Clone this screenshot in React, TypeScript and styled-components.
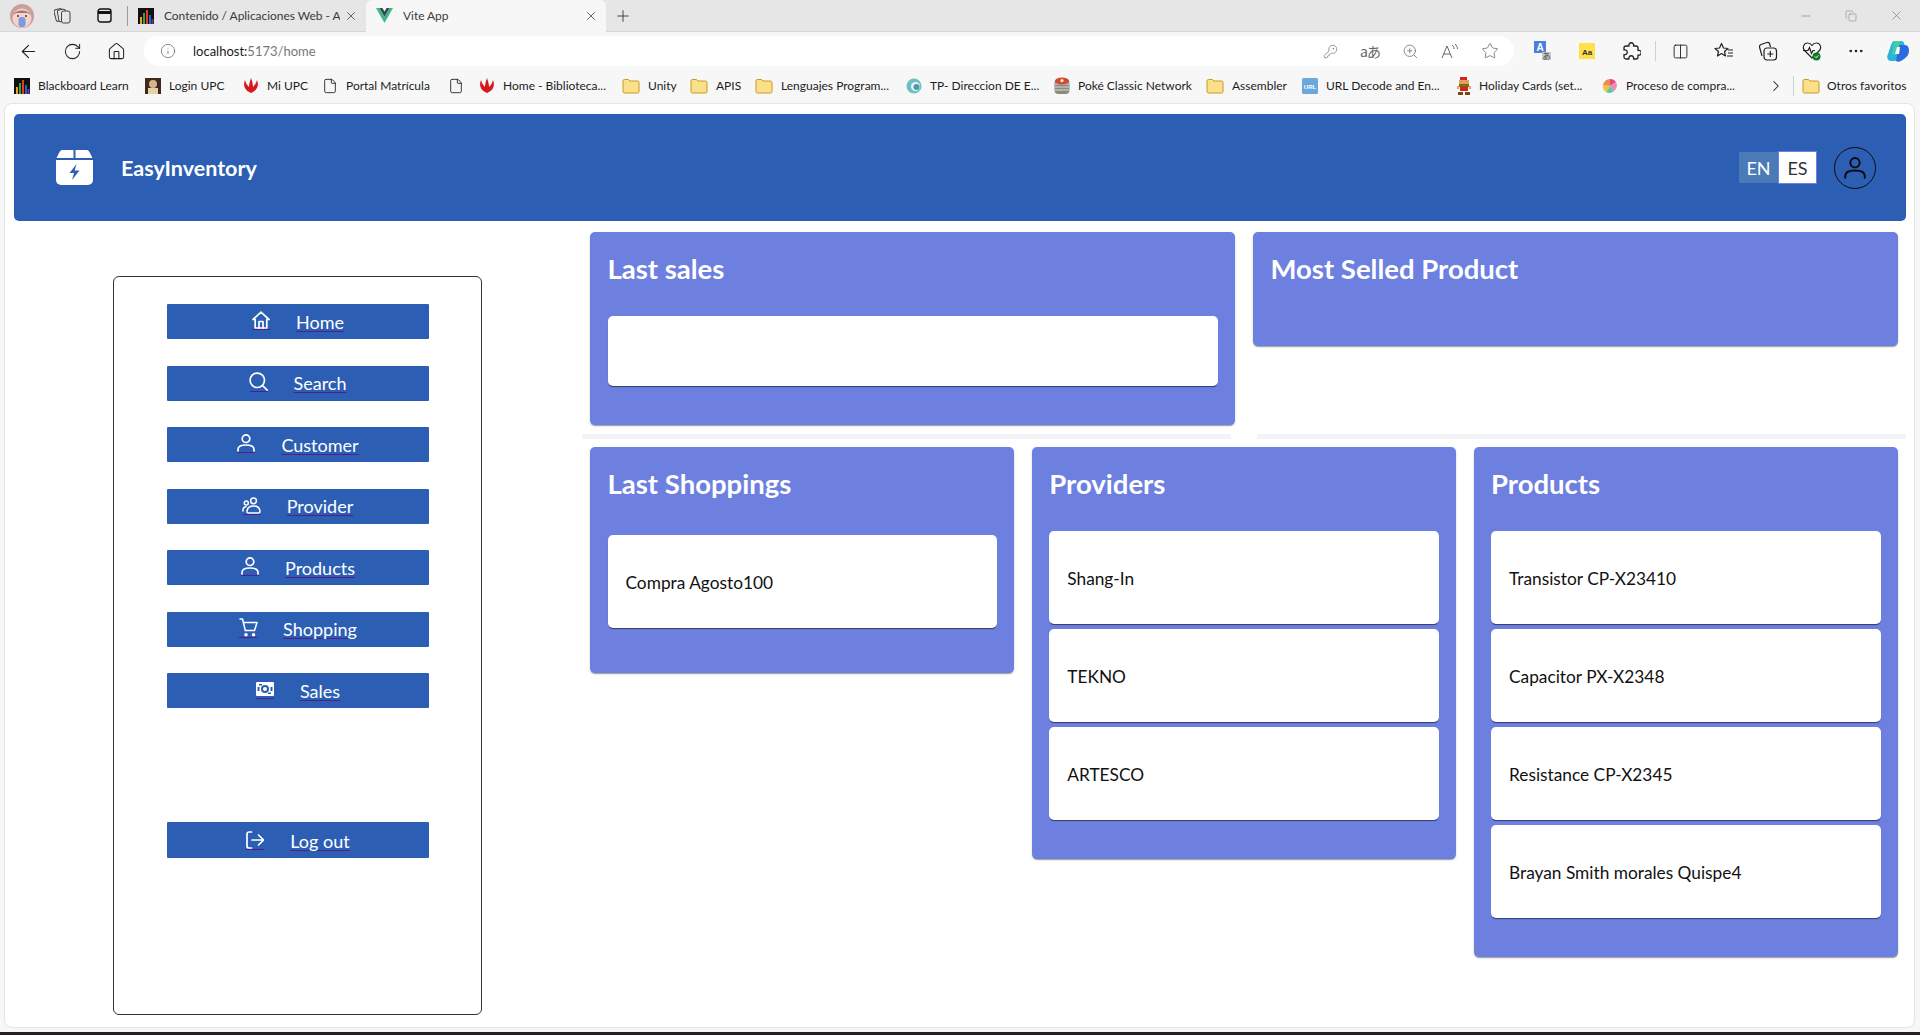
import React from 'react';
import styled, { createGlobalStyle } from 'styled-components';
import {
  ArrowLeft,
  RotateCw,
  House,
  Info,
  KeyRound,
  ZoomIn,
  Star,
  Columns2,
  Ellipsis,
  X,
  Plus,
  Minus,
  Copy,
  File,
  ChevronRight,
} from 'lucide-react';

const BLUE = '#2c5fb3';
const INDIGO = '#6d80e0';
const FONT = `Lato, "Open Sans", sans-serif`;

const GlobalStyle = createGlobalStyle`
  html, body {
    margin: 0;
    padding: 0;
    background: #f7f7f7;
    font-family: ${FONT};
  }
  * { box-sizing: border-box; }
`;

const Screen = styled.div`
  width: 1920px;
  height: 1035px;
  overflow: hidden;
  background: #f7f7f7;
  display: flex;
  flex-direction: column;
`;

/* browser chrome */
const TabStrip = styled.div`
  height: 32px;
  background: #e6e6e6;
  border-bottom: 1px solid #d6d6d6;
  display: flex;
  align-items: center;
  color: #333;
`;

const Profile = styled.div`
  width: 24px;
  height: 24px;
  margin: 0 12px 0 10px;
  display: flex;
`;

const StripIcon = styled.div<{ $w: number }>`
  width: ${(p) => p.$w}px;
  display: flex;
  align-items: center;
  justify-content: center;
  color: #333;
`;

const StripSep = styled.div`
  width: 1px;
  height: 20px;
  background: #9a9a9a;
  margin: 0 10px 0 -3px;
`;

const Tab = styled.div<{ $active?: boolean; $w: number }>`
  width: ${(p) => p.$w}px;
  height: 32px;
  display: flex;
  align-items: center;
  gap: 10px;
  padding-right: 8px;
  background: ${(p) => (p.$active ? '#f7f7f7' : 'transparent')};
  border-radius: ${(p) => (p.$active ? '6px 6px 0 0' : '0')};
  padding-left: ${(p) => (p.$active ? '10px' : '0')};
  font-size: 12px;
  color: #3a3a3a;
  svg:last-child {
    margin-left: -6px;
  }
`;

const TabTitle = styled.span`
  flex: 1;
  white-space: nowrap;
  overflow: hidden;
  letter-spacing: -0.05px;
`;

const WindowControls = styled.div`
  margin-left: auto;
  display: flex;
  align-items: center;
  gap: 32px;
  padding-right: 16px;
  color: #777;
`;

const Toolbar = styled.div`
  height: 40px;
  display: flex;
  align-items: center;
  padding: 0 2px 2px 6px;
  color: #222;
`;

const ToolButton = styled.div<{ $w?: number }>`
  width: ${(p) => p.$w ?? 44}px;
  height: 30px;
  flex: none;
  display: flex;
  align-items: center;
  justify-content: center;
`;

const AddressBar = styled.div`
  flex: 1;
  height: 30px;
  margin-left: 6px;
  margin-right: 4px;
  background: #fff;
  border-radius: 15px;
  display: flex;
  align-items: center;
  padding: 0 4px 0 16px;
  color: #6e6e6e;
`;

const Url = styled.div`
  flex: 1;
  margin-left: 17px;
  font-size: 13px;
  color: #777;
  b {
    font-weight: 400;
    color: #1a1a1a;
  }
`;

const AddressIcon = styled.div`
  width: 40px;
  display: flex;
  justify-content: center;
`;

const Extensions = styled.div`
  display: flex;
  flex: none;
  padding-left: 3px;
`;

const ToolSep = styled.div`
  width: 5px;
  height: 20px;
  flex: none;
  display: flex;
  justify-content: center;
  &:before {
    content: '';
    width: 1px;
    background: #d0d0d0;
  }
`;

const Bookmarks = styled.div`
  height: 31px;
  display: flex;
  align-items: center;
  padding: 0 0 4px 14px;
  font-size: 12px;
  color: #1c1c1c;
`;

const Bookmark = styled.div<{ $w: number; $gap?: number }>`
  width: ${(p) => p.$w}px;
  flex: none;
  display: flex;
  align-items: center;
  gap: ${(p) => p.$gap ?? 8}px;
  white-space: nowrap;
  svg {
    flex: none;
  }
`;

const BookmarkSep = styled.div`
  width: 1px;
  height: 20px;
  background: #d0d0d0;
  margin-right: 8px;
`;

/* page */
const Page = styled.div`
  height: 925px;
  margin: 0 5px 0 4px;
  flex: none;
  background: #fff;
  border: 1px solid #e4e4e4;
  border-radius: 8px;
  padding: 10px 8px 0 9px;
  display: flex;
  flex-direction: column;
`;

const Desktop = styled.div`
  margin-top: 4px;
  flex: 1;
  background: #2a1b22;
`;

const Header = styled.header`
  height: 107px;
  flex: none;
  background: ${BLUE};
  border-radius: 5px;
  display: flex;
  align-items: center;
  padding: 0 30px 0 42px;
  color: #fff;
`;

const Brand = styled.div`
  margin: 1px 0 0 28px;
  font-size: 21.5px;
  font-weight: 700;
`;

const LangGroup = styled.div`
  margin-left: auto;
  display: flex;
  align-items: center;
`;

const LangButton = styled.div<{ $active?: boolean }>`
  width: 39px;
  height: ${(p) => (p.$active ? 33 : 31)}px;
  display: flex;
  align-items: center;
  justify-content: center;
  font-size: 18px;
  background: ${(p) => (p.$active ? '#fff' : '#4b7bb6')};
  color: ${(p) => (p.$active ? '#333' : '#fff')};
  border: ${(p) => (p.$active ? `1px solid ${INDIGO}` : 'none')};
`;

const Avatar = styled.div`
  width: 42px;
  height: 42px;
  margin-left: 17px;
  border: 1.5px solid #0c0c0c;
  border-radius: 50%;
  color: #0c0c0c;
  display: flex;
  align-items: center;
  justify-content: center;
`;

const Body = styled.div`
  flex: 1;
  display: flex;
`;

const Aside = styled.aside`
  width: 568px;
  flex: none;
  display: flex;
  justify-content: center;
  padding: 55px 1px 0 0;
`;

const Sidebar = styled.nav`
  width: 369px;
  height: 739px;
  border: 1.5px solid #333;
  border-radius: 6px;
  padding: 27px 0 0 1px;
  display: flex;
  flex-direction: column;
  align-items: center;
  gap: 26.5px;
`;

const NavButton = styled.a<{ $last?: boolean }>`
  width: 262px;
  height: ${(p) => (p.$last ? 36 : 35)}px;
  flex: none;
  margin-top: ${(p) => (p.$last ? '87.5px' : '0')};
  padding-top: ${(p) => (p.$last ? '2px' : '0')};
  background: ${BLUE};
  border-radius: 1px;
  display: flex;
  align-items: center;
  justify-content: center;
  gap: 26px;
  color: #fff;
  font-size: 18px;
`;

const NavIcon = styled.span`
  width: 18px;
  height: 19px;
  margin-top: -2px;
  display: flex;
  justify-content: center;
  align-items: flex-end;
  border-bottom: 1px solid #551a8b;
  svg {
    flex: none;
  }
`;

const NavLabel = styled.span`
  text-decoration: underline;
  text-decoration-color: #551a8b;
  text-decoration-thickness: 1px;
  text-underline-offset: 2px;
`;

const Main = styled.main`
  flex: 1;
  min-width: 0;
  display: flex;
  flex-direction: column;
  padding-top: 11px;
`;

const CardRow = styled.div<{ $gap: number }>`
  display: flex;
  align-items: flex-start;
  gap: ${(p) => p.$gap}px;
  padding: 0 8px;
`;

const Card = styled.section<{ $bottom: number }>`
  flex: 1 1 0;
  min-width: 0;
  background: ${INDIGO};
  border-radius: 5px;
  padding: 0 17.5px ${(p) => p.$bottom}px;
  box-shadow: 0 2px 1px -1px rgba(0, 0, 0, 0.2), 0 1px 1px 0 rgba(0, 0, 0, 0.14), 0 1px 3px 0 rgba(0, 0, 0, 0.12);
`;

const CardTitle = styled.h2`
  margin: 0;
  height: 72px;
  display: flex;
  align-items: center;
  color: #fff;
  font-size: 27.5px;
  font-weight: 700;
`;

const ItemList = styled.div<{ $top: number }>`
  margin-top: ${(p) => p.$top}px;
  display: flex;
  flex-direction: column;
  gap: 4.9px;
`;

const Item = styled.div<{ $h: number }>`
  height: ${(p) => p.$h}px;
  background: #fff;
  border-radius: 5px;
  display: flex;
  align-items: center;
  padding: 2px 18px 0;
  font-size: 17.3px;
  color: #111;
  box-shadow: 0 2px 1px -1px rgba(0, 0, 0, 0.4), 0 1px 1px 0 rgba(0, 0, 0, 0.2);
`;

const Dividers = styled.div`
  display: flex;
  gap: 26px;
  margin: 9px 0 8px;
`;

const Divider = styled.div`
  width: 649px;
  height: 5px;
  background: #f2f3f7;
`;

/* small drawings */
const Bars = () => (
  <svg width="16" height="16" viewBox="0 0 16 16">
    <rect width="16" height="16" fill="#111" />
    <rect x="2" y="9" width="2" height="7" fill="#f0a020" />
    <rect x="5" y="5" width="2" height="11" fill="#3aa040" />
    <rect x="8" y="2" width="2" height="14" fill="#e04020" />
    <rect x="11" y="7" width="2" height="9" fill="#3060d0" />
    <rect x="13.5" y="11" width="2" height="5" fill="#7030a0" />
  </svg>
);

const VueMark = () => (
  <svg width="17" height="15" viewBox="0 0 17 15">
    <path d="M0 0h3.4l5.1 8.8L13.6 0H17L8.5 15z" fill="#41b883" />
    <path d="M3.4 0h3l2.1 3.6L10.6 0h3L8.5 8.8z" fill="#35495e" />
  </svg>
);

const ProfileFace = () => (
  <svg width="24" height="24" viewBox="0 0 24 24">
    <circle cx="12" cy="12" r="12" fill="#c9a09a" />
    <circle cx="12" cy="14" r="9.5" fill="#f4d3cc" />
    <path d="M3 11c2-6 16-6 18 0l-3-2H6z" fill="#a87a76" />
    <rect x="8.5" y="13" width="7" height="10" rx="3" fill="#7d9be0" />
    <circle cx="8" cy="12" r="1" fill="#5a3a3a" />
    <circle cx="16" cy="12" r="1" fill="#5a3a3a" />
  </svg>
);

const Workspaces = () => (
  <svg width="17" height="17" viewBox="0 0 17 17" fill="#e6e6e6" stroke="#444" strokeWidth="1">
    <rect x="1" y="2" width="8" height="12" rx="2" transform="rotate(-14 5 8)" />
    <rect x="4" y="2.5" width="8" height="12" rx="2" transform="rotate(-10 8 8)" />
    <rect x="7.5" y="4" width="8.5" height="12" rx="2" />
  </svg>
);

const TabActions = () => (
  <svg width="15" height="15" viewBox="0 0 15 15" fill="none" stroke="#111" strokeWidth="1.4">
    <rect x="1" y="1" width="13" height="13" rx="2.5" />
    <path d="M1 4.5h13" strokeWidth="3" />
  </svg>
);

const Upc = () => (
  <svg width="16" height="16" viewBox="0 0 16 16">
    <path d="M2 2c-2 5-1 10 6 13 7-3 8-8 6-13-1 4-3 6-4 7 0-3-1-6-2-9-1 3-2 6-2 9C5 8 3 6 2 2z" fill="#d8171e" />
  </svg>
);

const Folder = () => (
  <svg width="18" height="16" viewBox="0 0 18 16">
    <path d="M1 3a1.5 1.5 0 0 1 1.5-1.5h4L8 3h7.5A1.5 1.5 0 0 1 17 4.5v9a1.5 1.5 0 0 1-1.5 1.5h-13A1.5 1.5 0 0 1 1 13.5z" fill="#fbe08a" stroke="#c99a1c" />
  </svg>
);

const Portrait = () => (
  <svg width="16" height="16" viewBox="0 0 16 16">
    <rect width="16" height="16" fill="#40281c" />
    <circle cx="8" cy="6" r="4" fill="#d8b48c" />
    <rect x="3" y="10" width="10" height="6" fill="#e6d0a8" />
  </svg>
);

const TpMark = () => (
  <svg width="16" height="16" viewBox="0 0 16 16">
    <circle cx="8" cy="8" r="7.5" fill="#6cc0c4" />
    <circle cx="9.5" cy="8.5" r="4.5" fill="#e8f4f4" />
    <circle cx="10.5" cy="9" r="3" fill="#4a9aa8" />
  </svg>
);

const Stack = () => (
  <svg width="16" height="18" viewBox="0 0 16 18">
    <rect x="0.5" y="2" width="15" height="15" rx="4" fill="#8a8a80" />
    <path d="M1 7h14M1 10h14M1 13h14" stroke="#dedcd2" />
    <ellipse cx="8" cy="4" rx="7" ry="3.5" fill="#d24a30" />
    <circle cx="8" cy="3.6" r="1.6" fill="#eee" />
  </svg>
);

const UrlMark = () => (
  <svg width="16" height="16" viewBox="0 0 16 16">
    <rect width="16" height="16" rx="1.5" fill="#6aa8dc" />
    <text x="8" y="10.5" textAnchor="middle" fontSize="6" fontWeight="700" fill="#fff" fontFamily="Liberation Sans, sans-serif">URL</text>
  </svg>
);

const Mario = () => (
  <svg width="14" height="18" viewBox="0 0 14 18" shapeRendering="crispEdges">
    <rect x="3" y="0" width="7" height="3" fill="#d8201c" />
    <rect x="2" y="3" width="10" height="4" fill="#e0a060" />
    <rect x="2" y="7" width="10" height="3" fill="#7a6a10" />
    <rect x="3" y="10" width="8" height="4" fill="#d8201c" />
    <rect x="0" y="9" width="2" height="3" fill="#e0a060" />
    <rect x="12" y="9" width="2" height="3" fill="#e0a060" />
    <rect x="1" y="15" width="5" height="3" fill="#7a4a10" />
    <rect x="8" y="15" width="5" height="3" fill="#7a4a10" />
  </svg>
);

const Pinwheel = () => (
  <svg width="16" height="16" viewBox="0 0 16 16">
    <path d="M8 8V1a7 7 0 0 1 6 3z" fill="#e8467c" />
    <path d="M8 8l6-4a7 7 0 0 1-2 9z" fill="#f08ab0" />
    <path d="M8 8l4 5a7 7 0 0 1-8 1z" fill="#5cc8a8" />
    <path d="M8 8l-4 6a7 7 0 0 1-3-7z" fill="#f4c040" />
    <path d="M8 8L1 7a7 7 0 0 1 7-6z" fill="#f08a50" />
  </svg>
);

const TranslateMark = () => (
  <svg width="18" height="20" viewBox="0 0 18 20">
    <rect width="12" height="12" fill="#4a7fdc" />
    <text x="6" y="10" textAnchor="middle" fontSize="10" fontWeight="700" fill="#fff" fontFamily="Liberation Sans, sans-serif">A</text>
    <rect x="8" y="11" width="9" height="8" fill="#c8c8c8" />
    <text x="12.5" y="18" textAnchor="middle" fontSize="8" fill="#444" fontFamily="Noto Sans CJK JP, sans-serif">あ</text>
  </svg>
);

const ReaderMark = () => (
  <svg width="16" height="16" viewBox="0 0 16 16">
    <rect width="16" height="16" fill="#ffe14d" />
    <text x="8" y="11.5" textAnchor="middle" fontSize="8" fontWeight="700" fill="#333" fontFamily="Liberation Sans, sans-serif">Aa</text>
  </svg>
);

const PuzzleMark = () => (
  <svg width="19" height="19" viewBox="0 0 19 19" fill="none" stroke="#222" strokeWidth="1.3" strokeLinejoin="round">
    <path d="M4 4h3a2.4 2.4 0 1 1 4.500 0H14a2 2 0 0 1 2 2v2.500a2.400 2.400 0 1 1 0 4.500V15a2 2 0 0 1-2 2h-2.500a2.400 2.400 0 1 0-4.500 0H4a2 2 0 0 1-2-2v-2.500a2.400 2.400 0 1 0 0-4.500V6a2 2 0 0 1 2-2z" />
  </svg>
);

const FavoritesMark = () => (
  <svg width="20" height="18" viewBox="0 0 20 18" fill="none" stroke="#222" strokeWidth="1.2" strokeLinejoin="round">
    <path d="M7.5 1.5l2 4.500 4.500.5-3.500 3 1 4.500-4-2.500-4 2.500 1-4.500-3.500-3 4.500-.5z" />
    <path d="M14 8h5M14 11h5M13 14h6" />
  </svg>
);

const CollectionsMark = () => (
  <svg width="20" height="20" viewBox="0 0 20 20" fill="none" stroke="#222" strokeWidth="1.2" strokeLinejoin="round">
    <path d="M4 15L1.500 6c-.3-1.500.5-2 1.500-2.500l6-2c1-.3 2 0 2.500 1L12.500 6" />
    <rect x="6" y="7" width="12.5" height="12" rx="3" fill="#f7f7f7" />
    <path d="M12.300 10v6M9.300 13h6" />
  </svg>
);

const HeartCheckMark = () => (
  <svg width="20" height="20" viewBox="0 0 20 20">
    <path d="M10 17L2.500 9.500C0 6.500 2 2 5.500 2 7.500 2 9 3 10 4.500 11 3 12.500 2 14.500 2 18 2 20 6.500 17.500 9.500z" fill="none" stroke="#222" strokeWidth="1.2" />
    <path d="M1 9.500h5l1.500-3 2 6 1.500-3h2" fill="none" stroke="#222" strokeWidth="1.2" />
    <circle cx="14.5" cy="15.5" r="4" fill="#117a28" />
    <path d="M12.800 15.500l1.300 1.300 2.200-2.400" fill="none" stroke="#fff" strokeWidth="1" />
  </svg>
);

const CopilotMark = () => (
  <svg width="22" height="24" viewBox="0 0 22 24">
    <path d="M7 2h7c3 0 4 3 3 6l-4 9c-1 3-3 5-6 5H4c-3 0-5-3-3-7l3-9c1-2 2-4 3-4z" fill="#2cb4d8" />
    <path d="M12 6h6c3 0 4 3 4 6s-2 6-5 8l-3 2c-2 1-4 1-5 0z" fill="#2a6be0" />
    <path d="M7 2h7l-5 12c-1 2-3 2-4 1z" fill="#3bd0a8" />
    <path d="M10 8h3l-1 7h-4z" fill="#fff" />
  </svg>
);

const ReadAloud = () => (
  <svg width="18" height="16" viewBox="0 0 18 16" fill="none" stroke="#666" strokeWidth="1">
    <path d="M1 15L6 3l5 12M3 11h6" />
    <path d="M11 2c1.500 1 2 2 2 4M14 1c1.500 1.300 2.500 3 2.500 5" />
  </svg>
);

const AaJp = styled.span`
  font-size: 14px;
  font-family: "Noto Sans CJK JP", sans-serif;
  color: #666;
  letter-spacing: -1px;
`;

const BoxLogo = () => (
  <svg width="37" height="35" viewBox="0 0 37 35">
    <path d="M6 0h11.500v8H0.500L3 3C4 1 5 0 6 0zM19.500 0H31c1 0 2 1 3 3l2.500 5h-17z" fill="#fff" />
    <path d="M0 10h37v20a5 5 0 0 1-5 5H5a5 5 0 0 1-5-5z" fill="#fff" />
    <path d="M20.500 14l-7 9h4.500l-2 7 7.500-9.500h-4.800z" fill={BLUE} />
  </svg>
);

const strokeProps = {
  fill: 'none',
  stroke: 'currentColor',
  strokeWidth: 1.7,
  strokeLinecap: 'round' as const,
  strokeLinejoin: 'round' as const,
};

const HomeIcon = () => (
  <svg width="18" height="18" viewBox="0 0 18 18" {...strokeProps}>
    <path d="M1 8.500L9 1.200l8 7.300h-2.200V17H3.200V8.500z" />
    <path d="M7 17v-6.500h4V17" />
  </svg>
);

const SearchIcon = () => (
  <svg width="19" height="19" viewBox="0 0 19 19" {...strokeProps}>
    <circle cx="8.3" cy="8.3" r="7.2" />
    <path d="M13.500 13.500l4.700 4.700" />
  </svg>
);

const UserIcon = ({ w = 18, h = 18, sw = 1.7 }: { w?: number; h?: number; sw?: number }) => (
  <svg width={w} height={h} viewBox="0 0 18 18" {...strokeProps} strokeWidth={sw}>
    <circle cx="9" cy="4.7" r="3.8" />
    <path d="M1 17v-1.500c0-3 3-4.500 8-4.500s8 1.500 8 4.500V17" />
  </svg>
);

const ProviderIcon = () => (
  <svg width="19" height="17" viewBox="0 0 19 17" {...strokeProps} strokeWidth={1.5}>
    <circle cx="11.5" cy="3.8" r="2.9" />
    <path d="M5 15c0-4 2.500-6 6.500-6s6.500 2 6.500 6c0 1-1 1-1.500 1H6.500C6 16 5 16 5 15z" />
    <circle cx="4.3" cy="6" r="2" />
    <path d="M1 14c-.3-2.500 1-4.200 3-4.200" />
  </svg>
);

const CartIcon = () => (
  <svg width="19" height="19" viewBox="0 0 19 19" {...strokeProps} strokeWidth={1.5}>
    <path d="M1 1h2.500l2.800 11.500h9.200L18 4.500H4.500" />
    <circle cx="7" cy="16.8" r="1" fill="currentColor" />
    <circle cx="14.5" cy="16.8" r="1" fill="currentColor" />
  </svg>
);

const LogoutIcon = () => (
  <svg width="18" height="18" viewBox="0 0 18 18" {...strokeProps}>
    <path d="M5.500 1H3a2 2 0 0 0-2 2v12a2 2 0 0 0 2 2h2.500" />
    <path d="M6 9h11.500M12.500 4l5 5-5 5" />
  </svg>
);

const Banknote = () => (
  <svg width="18" height="14" viewBox="0 0 18 14" style={{ marginBottom: 2 }}>
    <rect width="18" height="14" rx="1" fill="#fff" />
    <circle cx="9" cy="7" r="4" fill={BLUE} />
    <circle cx="9" cy="7" r="2" fill="#fff" />
    <rect x="1.5" y="5" width="2" height="4" fill={BLUE} />
    <rect x="14.5" y="5" width="2" height="4" fill={BLUE} />
    <rect x="3" y="2" width="3" height="1.5" fill={BLUE} />
    <rect x="12" y="10.5" width="3" height="1.5" fill={BLUE} />
  </svg>
);

const navItems = [
  { label: 'Home', icon: <HomeIcon /> },
  { label: 'Search', icon: <SearchIcon /> },
  { label: 'Customer', icon: <UserIcon /> },
  { label: 'Provider', icon: <ProviderIcon /> },
  { label: 'Products', icon: <UserIcon /> },
  { label: 'Shopping', icon: <CartIcon /> },
  { label: 'Sales', icon: <Banknote /> },
];

const bookmarks = [
  { w: 131, icon: <Bars />, text: 'Blackboard Learn' },
  { w: 98, icon: <Portrait />, text: 'Login UPC' },
  { w: 79, icon: <Upc />, text: 'Mi UPC' },
  { w: 126, icon: <File size={16} strokeWidth={1.3} />, text: 'Portal Matrícula' },
  { w: 31, icon: <File size={16} strokeWidth={1.3} />, text: '' },
  { w: 143, icon: <Upc />, text: 'Home - Biblioteca...' },
  { w: 68, icon: <Folder />, text: 'Unity' },
  { w: 65, icon: <Folder />, text: 'APIS' },
  { w: 151, icon: <Folder />, text: 'Lenguajes Program...' },
  { w: 148, icon: <TpMark />, text: 'TP- Direccion DE E...' },
  { w: 152, icon: <Stack />, text: 'Poké Classic Network' },
  { w: 96, icon: <Folder />, text: 'Assembler' },
  { w: 155, icon: <UrlMark />, text: 'URL Decode and En...' },
  { w: 145, icon: <Mario />, text: 'Holiday Cards (set...' },
  { w: 165, icon: <Pinwheel />, text: 'Proceso de compra...' },
];

const App = () => (
  <Screen>
    <GlobalStyle />
    <TabStrip>
      <Profile>
        <ProfileFace />
      </Profile>
      <StripIcon $w={32}>
        <Workspaces />
      </StripIcon>
      <StripIcon $w={52}>
        <TabActions />
      </StripIcon>
      <StripSep />
      <Tab $w={228}>
        <Bars />
        <TabTitle>Contenido / Aplicaciones Web - A</TabTitle>
        <X size={14} strokeWidth={1.3} />
      </Tab>
      <Tab $active $w={240}>
        <VueMark />
        <TabTitle>Vite App</TabTitle>
        <X size={14} strokeWidth={1.3} />
      </Tab>
      <StripIcon $w={34}>
        <Plus size={18} strokeWidth={1.2} />
      </StripIcon>
      <WindowControls>
        <Minus size={14} strokeWidth={1} />
        <Copy size={12} strokeWidth={1} />
        <X size={15} strokeWidth={1} />
      </WindowControls>
    </TabStrip>

    <Toolbar>
      <ToolButton>
        <ArrowLeft size={21} strokeWidth={1.3} />
      </ToolButton>
      <ToolButton>
        <RotateCw size={19} strokeWidth={1.3} />
      </ToolButton>
      <ToolButton>
        <House size={19} strokeWidth={1.3} />
      </ToolButton>
      <AddressBar>
        <Info size={16} strokeWidth={1.2} />
        <Url>
          <b>localhost:</b>5173/home
        </Url>
        <AddressIcon>
          <KeyRound size={15} strokeWidth={1.1} />
        </AddressIcon>
        <AddressIcon>
          <AaJp>aあ</AaJp>
        </AddressIcon>
        <AddressIcon>
          <ZoomIn size={17} strokeWidth={1.1} />
        </AddressIcon>
        <AddressIcon>
          <ReadAloud />
        </AddressIcon>
        <AddressIcon>
          <Star size={18} strokeWidth={1.1} />
        </AddressIcon>
      </AddressBar>
      <Extensions>
        <ToolButton>
          <TranslateMark />
        </ToolButton>
        <ToolButton>
          <ReaderMark />
        </ToolButton>
        <ToolButton>
          <PuzzleMark />
        </ToolButton>
      </Extensions>
      <ToolSep />
      <ToolButton>
        <Columns2 size={17} strokeWidth={1.3} />
      </ToolButton>
      <ToolButton>
        <FavoritesMark />
      </ToolButton>
      <ToolButton>
        <CollectionsMark />
      </ToolButton>
      <ToolButton>
        <HeartCheckMark />
      </ToolButton>
      <ToolButton>
        <Ellipsis size={18} strokeWidth={1.6} />
      </ToolButton>
      <ToolButton $w={40}>
        <CopilotMark />
      </ToolButton>
    </Toolbar>

    <Bookmarks>
      {bookmarks.map((b) => (
        <Bookmark key={b.text + b.w} $w={b.w}>
          {b.icon}
          {b.text}
        </Bookmark>
      ))}
      <Bookmark $w={26}>
        <ChevronRight size={18} strokeWidth={1.4} />
      </Bookmark>
      <BookmarkSep />
      <Bookmark $w={110} $gap={7}>
        <Folder />
        Otros favoritos
      </Bookmark>
    </Bookmarks>

    <Page>
      <Header>
        <BoxLogo />
        <Brand>EasyInventory</Brand>
        <LangGroup>
          <LangButton>EN</LangButton>
          <LangButton $active>ES</LangButton>
        </LangGroup>
        <Avatar>
          <UserIcon w={24} h={22} sw={1.6} />
        </Avatar>
      </Header>

      <Body>
        <Aside>
          <Sidebar>
            {navItems.map((n) => (
              <NavButton key={n.label}>
                <NavIcon>{n.icon}</NavIcon>
                <NavLabel>{n.label}</NavLabel>
              </NavButton>
            ))}
            <NavButton $last>
              <NavIcon>
                <LogoutIcon />
              </NavIcon>
              <NavLabel>Log out</NavLabel>
            </NavButton>
          </Sidebar>
        </Aside>

        <Main>
          <CardRow $gap={18}>
            <Card $bottom={39}>
              <CardTitle>Last sales</CardTitle>
              <ItemList $top={12}>
                <Item $h={70} />
              </ItemList>
            </Card>
            <Card $bottom={42}>
              <CardTitle>Most Selled Product</CardTitle>
            </Card>
          </CardRow>

          <Dividers>
            <Divider />
            <Divider />
          </Dividers>

          <CardRow $gap={17.3}>
            <Card $bottom={45}>
              <CardTitle>Last Shoppings</CardTitle>
              <ItemList $top={16}>
                <Item $h={93}>Compra Agosto100</Item>
              </ItemList>
            </Card>
            <Card $bottom={39}>
              <CardTitle>Providers</CardTitle>
              <ItemList $top={12}>
                <Item $h={93}>Shang-In</Item>
                <Item $h={93}>TEKNO</Item>
                <Item $h={93}>ARTESCO</Item>
              </ItemList>
            </Card>
            <Card $bottom={39}>
              <CardTitle>Products</CardTitle>
              <ItemList $top={12}>
                <Item $h={93}>Transistor CP-X23410</Item>
                <Item $h={93}>Capacitor PX-X2348</Item>
                <Item $h={93}>Resistance CP-X2345</Item>
                <Item $h={93}>Brayan Smith morales Quispe4</Item>
              </ItemList>
            </Card>
          </CardRow>
        </Main>
      </Body>
    </Page>
    <Desktop />
  </Screen>
);

export default App;
